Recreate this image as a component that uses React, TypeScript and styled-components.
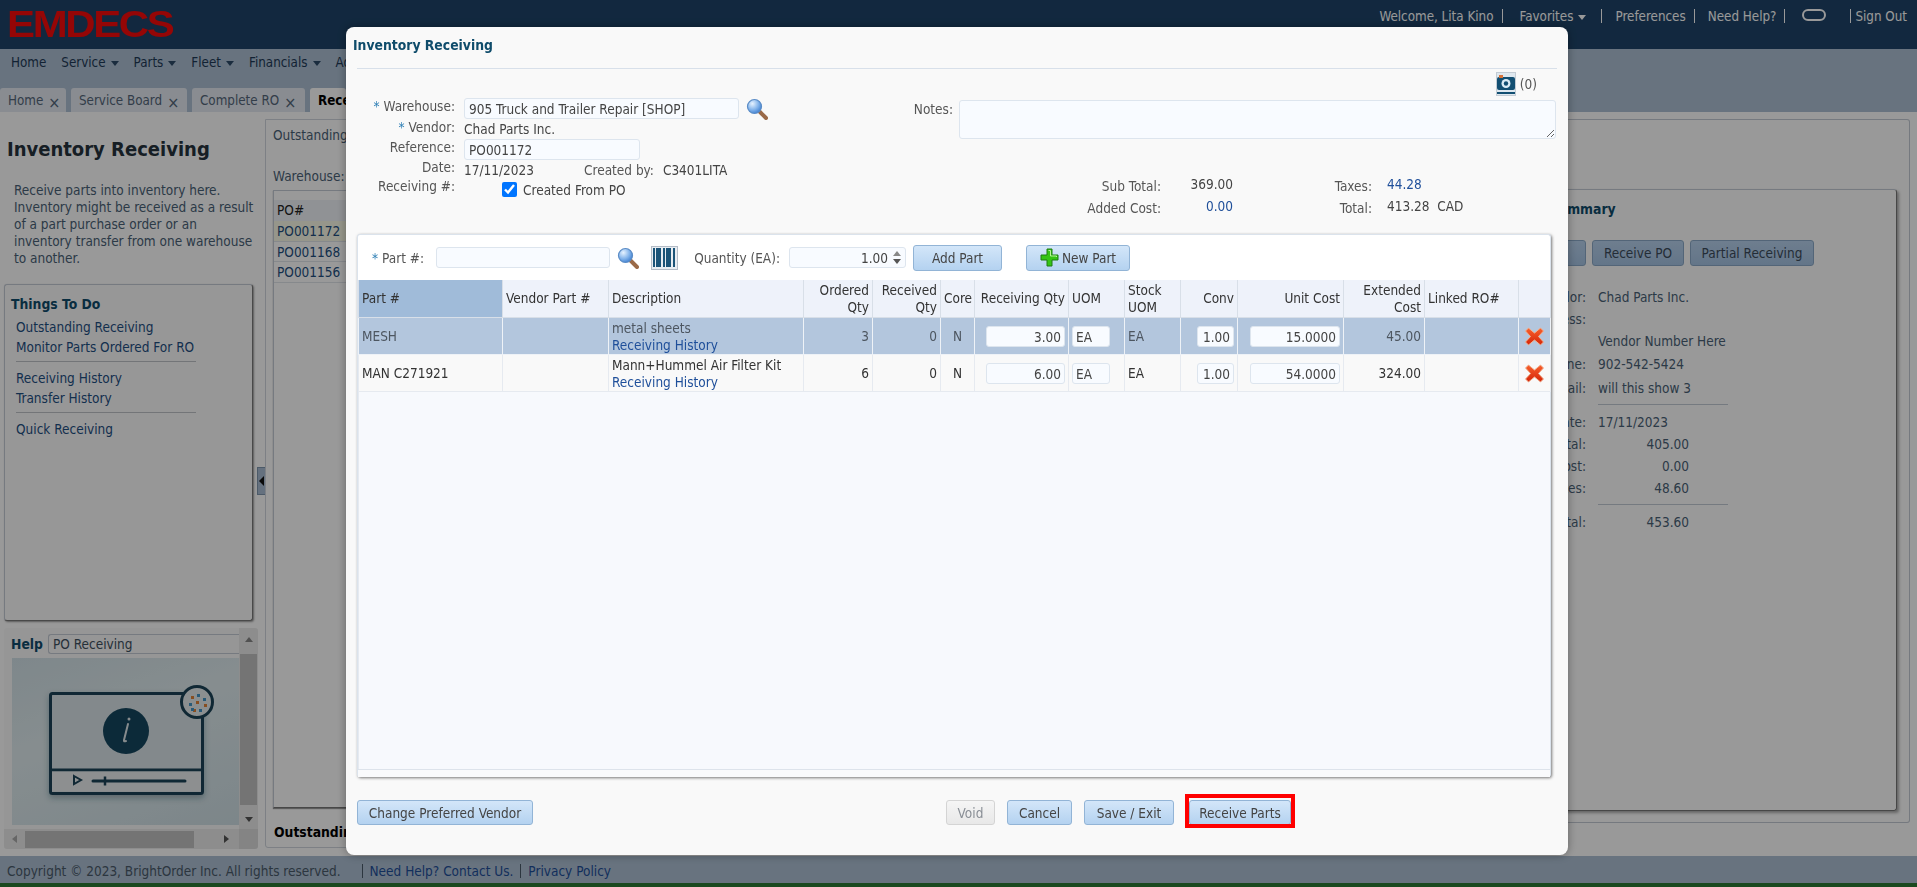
import { ReactElement } from 'react';
import styled, { createGlobalStyle } from 'styled-components';

const GlobalStyle = createGlobalStyle`
  html, body {
    margin: 0;
    padding: 0;
    height: 100%;
    overflow: hidden;
    background: #fff;
    color: #4a6277;
    font-family: "DejaVu Sans Condensed", "DejaVu Sans", sans-serif;
    font-stretch: condensed;
    font-size: 13.5px;
  }
  * { box-sizing: border-box; }
  input, textarea { font: inherit; font-stretch: condensed; }
`;

const Page = styled.div`
  display: flex;
  flex-direction: column;
  height: 887px;
  width: 1917px;
`;

/* top bars */
const Header = styled.header`
  align-items: flex-start;
  background: #1e4469;
  display: flex;
  height: 49px;
  justify-content: space-between;
  overflow: hidden;
`;
const Logo = styled.div`
  color: #f80a0a;
  font-family: "Liberation Sans", sans-serif;
  font-size: 36px;
  font-stretch: normal;
  font-weight: 700;
  letter-spacing: -2px;
  line-height: 30px;
  margin: 10px 0 0 7px;
  transform: scaleX(1.165);
  transform-origin: left center;
`;
const UserMenu = styled.nav`
  align-items: center;
  color: #fff;
  display: flex;
  font-size: 13.3px;
  height: 32px;
  padding-right: 10px;
`;
const UserLink = styled.span<{ $left: number }>`
  margin-left: ${p => p.$left}px;
  white-space: nowrap;
`;
const UserSep = styled.span<{ $left?: number }>`
  background: #fff;
  height: 14px;
  margin-left: ${p => p.$left || 8}px;
  width: 1px;
`;
const ChatOval = styled.span`
  border: 2px solid #fff;
  border-radius: 6px;
  height: 12px;
  margin: 0 16px 3px 17px;
  width: 24px;
`;
const Caret = styled.span<{ $color?: string }>`
  border-left: 4px solid transparent;
  border-right: 4px solid transparent;
  border-top: 5px solid ${p => p.$color || '#2c4a68'};
  display: inline-block;
  margin-left: 5px;
  vertical-align: 1px;
`;
const NavBar = styled.nav`
  align-items: center;
  background: #adc0d4;
  color: #1f3a57;
  display: flex;
  font-size: 13.3px;
  height: 39px;
  padding: 0 0 13px 11px;
`;
const NavItem = styled.span`
  margin-right: 15px;
  white-space: nowrap;
`;
const TabBar = styled.div`
  background: #adc0d4;
  display: flex;
  gap: 5px;
  height: 24px;
`;
const Tab = styled.div<{ $active?: boolean; $w: number }>`
  align-items: center;
  background: ${p => (p.$active ? '#fff' : '#e4eaf2')};
  border-radius: 3px 3px 0 0;
  color: ${p => (p.$active ? '#000' : '#55677a')};
  display: flex;
  font-size: 13.3px;
  font-weight: ${p => (p.$active ? 700 : 400)};
  gap: 5px;
  overflow: hidden;
  padding-left: 8px;
  width: ${p => p.$w}px;
`;
const TabClose = styled.span`
  color: #55677a;
  font-size: 16px;
  line-height: 15px;
  margin-top: 4px;
`;

/* page behind the dialog */
const Main = styled.main`
  background: #fff;
  display: flex;
  height: 744px;
  padding-left: 4px;
`;
const LeftColumn = styled.aside`
  display: flex;
  flex-direction: column;
  width: 254px;
`;
const PageTitle = styled.h1`
  color: #26323d;
  font-size: 20px;
  font-weight: 700;
  line-height: 24px;
  margin: 25px 0 0 3px;
`;
const Intro = styled.p`
  line-height: 17px;
  margin: 21px 0 17px 10px;
  width: 243px;
`;
const TodoPanel = styled.section`
  background: #fcfcfc;
  border: 1px solid #c5ccd6;
  border-bottom-color: #7a7a7a;
  border-radius: 3px;
  border-right-color: #7a7a7a;
  box-shadow: 1px 1px 2px #999;
  height: 337px;
  padding: 11px 6px;
  width: 249px;
`;
const PanelHeading = styled.h3`
  color: #0f4c6b;
  font-size: 13.8px;
  font-weight: 700;
  line-height: 16px;
  margin: 0 0 6px;
`;
const TodoLink = styled.div`
  color: #1f4f83;
  line-height: 19.5px;
  padding-left: 5px;
`;
const TodoRule = styled.div`
  background: #c0c4c8;
  height: 1px;
  margin: 4px 0 7px 5px;
  width: 180px;
`;
const HelpPanel = styled.section`
  background: #fafafa;
  border-radius: 3px;
  display: grid;
  grid-template-columns: 1fr 19px;
  grid-template-rows: 1fr 20px;
  height: 221px;
  margin-top: 7px;
  overflow: hidden;
  width: 254px;
`;
const HelpBody = styled.div`
  padding: 6px 0 0 8px;
`;
const HelpTop = styled.div`
  align-items: center;
  display: flex;
  gap: 5px;
  height: 20px;
  margin-bottom: 4px;
`;
const HelpLabel = styled.b`
  color: #0f4c6b;
  font-size: 13.8px;
  margin-left: -1px;
`;
const HelpSelect = styled.div`
  border: 1px solid #c5ccd6;
  border-right: 0;
  border-radius: 3px 0 0 3px;
  color: #3e5160;
  flex: 1;
  height: 20px;
  line-height: 18px;
  padding-left: 4px;
`;
const HelpPicture = styled.div`
  align-items: center;
  background: linear-gradient(160deg, #d3e2e8 0%, #e0ecef 40%, #d0e0e6 100%);
  display: flex;
  height: 167px;
  justify-content: center;
`;
const ScrollV = styled.div`
  align-items: center;
  background: #ececec;
  display: flex;
  flex-direction: column;
  height: 100%;
  justify-content: space-between;
  padding: 9px 0 7px;
`;
const ScrollThumbV = styled.div`
  background: #c2c2c2;
  height: 151px;
  margin: 4px 0;
  width: 17px;
`;
const ScrollH = styled.div`
  align-items: center;
  background: #ececec;
  display: flex;
  padding: 0 10px 0 8px;
`;
const ScrollThumbH = styled.div`
  background: #c2c2c2;
  height: 17px;
  margin: 0 auto 0 8px;
  width: 169px;
`;
const ScrollCorner = styled.div`
  background: #dcdcdc;
`;
const Arrow = styled.span<{ $dir: 'up' | 'down' | 'left' | 'right' }>`
  border: 4px solid transparent;
  ${p => (p.$dir === 'up' ? 'border-bottom: 5px solid #888; border-top: 0;' : '')}
  ${p => (p.$dir === 'down' ? 'border-top: 5px solid #555; border-bottom: 0;' : '')}
  ${p => (p.$dir === 'left' ? 'border-right: 5px solid #aaa; border-left: 0;' : '')}
  ${p => (p.$dir === 'right' ? 'border-left: 5px solid #555; border-right: 0;' : '')}
  height: 0;
  width: 0;
`;
const Splitter = styled.div`
  align-items: center;
  display: flex;
  justify-content: center;
  width: 7px;
`;
const SplitterHandle = styled.div`
  align-items: center;
  background: #a8bdd4;
  border: 1px solid #7f96ad;
  display: flex;
  flex: none;
  height: 28px;
  justify-content: center;
  margin-top: -7px;
  width: 9px;
`;
const SplitterArrow = styled.span`
  border-bottom: 5px solid transparent;
  border-right: 5px solid #111;
  border-top: 5px solid transparent;
`;
const WorkArea = styled.div`
  display: flex;
  flex: 1;
  padding: 7px 7px 0 0;
`;
const OutstandingPanel = styled.section`
  border: 1px solid #d0d6de;
  border-bottom-left-radius: 3px;
  display: flex;
  flex-direction: column;
  height: 729px;
  padding: 7px 7px;
  width: 640px;
`;
const FadedText = styled.div`
  line-height: 17px;
`;
const WarehouseText = styled(FadedText)`
  margin-top: 24px;
`;
const GridBox = styled.div`
  border: 1px solid #c5ccd6;
  border-bottom-color: #777;
  box-shadow: 0 1px 1px #999;
  height: 621px;
  margin-top: 5px;
`;
const GridHead = styled.div`
  background: #f0f3f8;
  border-top: 9px solid #fff;
  color: #222;
  height: 30px;
  line-height: 21px;
  padding-left: 3px;
`;
const GridRow = styled.div<{ $first?: boolean }>`
  background: ${p => (p.$first ? '#fbfbe8' : '#fff')};
  border-bottom: 1px solid #e0e4ea;
  color: #234f7f;
  height: 20.5px;
  line-height: 20px;
  padding-left: 3px;
`;
const BoldBottom = styled.div`
  color: #000;
  font-size: 13.8px;
  font-weight: 700;
  margin: 16px 0 0 1px;
`;
const SummaryArea = styled.section`
  border: 1px solid #c4cad4;
  border-left: 0;
  border-radius: 0 3px 3px 0;
  flex: 1;
  height: 704px;
  padding: 69px 12px 0 0;
`;
const SummaryPanel = styled.div`
  border: 1px solid #c5ccd6;
  border-bottom-color: #777;
  border-radius: 3px;
  border-right-color: #777;
  box-shadow: 2px 2px 3px #aaa;
  height: 622px;
  padding: 10px 0 0 360px;
`;
const SummaryTitle = styled.h3`
  color: #0f4c6b;
  font-size: 13.8px;
  font-weight: 700;
  line-height: 18px;
  margin: 0 0 22px 211px;
  white-space: nowrap;
`;
const SummaryActions = styled.div`
  display: flex;
  gap: 6px;
  margin-left: 230px;
`;
const SummaryButton = styled.div<{ $w: number }>`
  align-items: center;
  background: linear-gradient(#b8d2ee, #a6c4e4);
  border: 1px solid #8aa9c9;
  border-radius: 3px;
  color: #3d4c5c;
  display: flex;
  height: 26px;
  justify-content: center;
  width: ${p => p.$w}px;
`;
const SummaryList = styled.dl`
  column-gap: 12px;
  display: grid;
  grid-template-columns: 90px 130px;
  margin: 20px 0 0 230px;
`;
const SummaryLabel = styled.dt<{ $h: number }>`
  height: ${p => p.$h}px;
  line-height: ${p => p.$h}px;
  text-align: right;
`;
const SummaryValue = styled.dd<{ $h: number; $right?: boolean }>`
  height: ${p => p.$h}px;
  line-height: ${p => p.$h}px;
  margin: 0;
  padding-right: 39px;
  text-align: ${p => (p.$right ? 'right' : 'left')};
  white-space: nowrap;
`;
const SummaryRule = styled.div`
  background: #c4ccd6;
  grid-column: 2;
  height: 1px;
  margin: 5px 0 6px;
`;
const Footer = styled.footer`
  align-items: center;
  background: #adc0d4;
  border-bottom: 4px solid #2c7b35;
  color: #4a5a6a;
  display: flex;
  height: 31px;
  padding: 3px 0 0 7px;
`;
const FooterLink = styled.span`
  color: #1f4f9a;
`;
const FooterSep = styled.span<{ $left: number }>`
  background: #4a5a6a;
  height: 14px;
  margin: 0 7px 0 ${p => p.$left}px;
  width: 1px;
`;

/* dialog */
const Backdrop = styled.div`
  background: rgba(0, 0, 0, 0.4);
  inset: 0;
  position: fixed;
`;
const Dialog = styled.div`
  background: #f9f9f9;
  border-radius: 8px;
  box-shadow: 0 0 10px rgba(0, 0, 0, 0.35);
  color: #555;
  display: flex;
  flex-direction: column;
  height: 828px;
  left: 346px;
  padding: 0 17px 0 11px;
  position: fixed;
  top: 27px;
  width: 1222px;
`;
const DialogTitle = styled.h2`
  border-bottom: 1px solid #d8e0ea;
  color: #0f4c6b;
  font-size: 13.8px;
  font-weight: 700;
  height: 42px;
  line-height: 36px;
  margin: 0 -6px 0 0;
  text-indent: -4px;
`;
const AttachRow = styled.div`
  align-items: center;
  display: flex;
  gap: 4px;
  height: 29px;
  justify-content: flex-end;
  padding-right: 14px;
`;
const FormArea = styled.div`
  display: flex;
  height: 136px;
`;
const FormLeft = styled.div`
  column-gap: 9px;
  display: grid;
  grid-auto-rows: min-content;
  grid-template-columns: 98px 1fr;
  width: 489px;
`;
const FieldLabel = styled.div<{ $h: number }>`
  height: ${p => p.$h}px;
  line-height: ${p => p.$h - 4}px;
  text-align: right;
  white-space: nowrap;
`;
const Required = styled.span`
  color: #2e7fb5;
  margin-right: 4px;
`;
const FieldValue = styled.div<{ $h: number }>`
  align-items: center;
  color: #444;
  display: flex;
  height: ${p => p.$h}px;
`;
const TextField = styled.input<{ $w: number; $right?: boolean; $pr?: number }>`
  background: #f8fbff;
  border: 1px solid #dde5ee;
  border-radius: 3px;
  color: #444;
  height: 21px;
  outline: 0;
  padding: 2px ${p => p.$pr || 4}px 2px 4px;
  text-align: ${p => (p.$right ? 'right' : 'left')};
  width: ${p => p.$w}px;
`;
const SearchButton = styled.span`
  display: inline-flex;
  margin-left: 7px;
`;
const CreatedBy = styled.span`
  color: #555;
  margin: 0 9px 0 50px;
`;
const CreatedFrom = styled.label`
  align-items: center;
  display: flex;
  gap: 6px;
  margin: 2px 0 0 38px;
`;
const CheckBox = styled.input`
  height: 15px;
  margin: 0;
  width: 15px;
`;
const FormRight = styled.div`
  display: flex;
  flex: 1;
  flex-direction: column;
`;
const NotesRow = styled.div`
  display: flex;
  gap: 6px;
  margin-top: 2px;
`;
const NotesLabel = styled.div`
  line-height: 18px;
  text-align: right;
  width: 107px;
`;
const NotesBox = styled.textarea`
  background: #f8fbff;
  border: 1px solid #dde5ee;
  border-radius: 3px;
  flex: 1;
  height: 39px;
  margin-right: -5px;
  outline: 0;
`;
const Totals = styled.div`
  align-items: center;
  display: grid;
  grid-auto-rows: 22px;
  grid-template-columns: 315px 72px 139px auto;
  margin-top: 34px;
`;
const TotalLabel = styled.div`
  margin-top: 3px;
  text-align: right;
`;
const TotalValue = styled.div<{ $link?: boolean; $left?: boolean }>`
  color: ${p => (p.$link ? '#1f4f9a' : '#444')};
  margin-left: ${p => (p.$left ? '15px' : 0)};
  text-align: ${p => (p.$left ? 'left' : 'right')};
  white-space: pre;
`;
const PartsPanel = styled.section`
  background: #fff;
  border: 1px solid #dbe3ec;
  border-bottom: 0;
  border-radius: 3px;
  box-shadow: 1px 1px 3px #777;
  display: flex;
  flex-direction: column;
  height: 543px;
`;
const Toolbar = styled.div`
  align-items: center;
  display: flex;
  flex: none;
  height: 45px;
  padding-left: 14px;
`;
const ToolLabel = styled.span<{ $left?: number; $right?: number }>`
  margin: 0 ${p => p.$right || 9}px 0 ${p => p.$left || 0}px;
  white-space: nowrap;
`;
const Barcode = styled.span`
  display: inline-flex;
  margin-left: 12px;
`;
const Spinner = styled.span`
  display: flex;
  flex-direction: column;
  gap: 3px;
  margin: 0 12px 0 -13px;
`;
const Button = styled.button<{ $w: number; $gapLeft?: number }>`
  align-items: center;
  background: linear-gradient(#d3e6f9, #b4d2f0);
  border: 1px solid #92b4d6;
  border-radius: 3px;
  color: #444;
  display: inline-flex;
  font: inherit;
  font-stretch: condensed;
  gap: 3px;
  height: 25px;
  justify-content: center;
  margin-left: ${p => p.$gapLeft || 0}px;
  padding: 0;
  position: relative;
  width: ${p => p.$w}px;
`;
const ToolButton = styled(Button)`
  height: 26px;
`;
const VoidButton = styled(Button)`
  background: linear-gradient(#f5f5f5, #e8e8e8);
  border-color: #d4d4d4;
  color: #8a8f96;
`;
const HighlightedButton = styled(Button)`
  &::after {
    border: 4px solid #f00;
    bottom: -4px;
    content: '';
    left: -5px;
    pointer-events: none;
    position: absolute;
    right: -5px;
    top: -7px;
  }
`;
const PartsTable = styled.table`
  border-collapse: collapse;
  color: #333;
  table-layout: fixed;
  width: 1192px;
`;
const HeadCell = styled.th<{ $right?: boolean; $sorted?: boolean }>`
  background: ${p => (p.$sorted ? '#a0bbd9' : '#eef2fa')};
  border: 1px solid #d8dfe8;
  border-top: 0;
  color: #333;
  font-weight: 400;
  height: 37px;
  line-height: 17px;
  padding: 1px 3px 0;
  text-align: ${p => (p.$right ? 'right' : 'left')};
`;
const BodyRow = styled.tr<{ $selected?: boolean }>`
  background: ${p => (p.$selected ? '#b3c6dd' : '#f9f9f9')};
  color: ${p => (p.$selected ? '#4d5660' : '#333')};
`;
const Cell = styled.td<{ $right?: boolean; $center?: boolean }>`
  border: 1px solid #e6eaf0;
  height: 37px;
  line-height: 17px;
  padding: 2px 3px 0;
  text-align: ${p => (p.$right ? 'right' : p.$center ? 'center' : 'left')};
  white-space: nowrap;
`;
const SelectedCell = styled(Cell)`
  border-color: #eef2f7;
`;
const HistoryLink = styled.div`
  color: #1f4f9a;
`;
const CellInput = styled.input<{ $right?: boolean; $w: number }>`
  background: #f8fbff;
  border: 1px solid #dde5ee;
  border-radius: 3px;
  color: #444;
  height: 21px;
  outline: 0;
  padding: 0 3px;
  text-align: ${p => (p.$right ? 'right' : 'left')};
  vertical-align: middle;
  width: ${p => p.$w}px;
`;
const EmptyGrid = styled.div`
  background: #f7f9fd;
  border-left: 1px solid #e6eaf0;
  flex: 1;
`;
const GridFoot = styled.div`
  background: #f9fafc;
  border-top: 1px solid #dde3eb;
  flex: none;
  height: 8px;
`;
const ActionBar = styled.div`
  align-items: flex-start;
  display: flex;
  padding-top: 23px;
`;
const VoidSlot = styled.div`
  display: flex;
  margin-left: 413px;
`;
const DeleteSvg = styled.svg`
  display: block;
  margin: 0 auto;
`;

const columns = [144, 106, 195, 69, 68, 34, 94, 56, 56, 57, 106, 81, 94, 32];

function Magnifier(): ReactElement {
  return (
    <svg width="22" height="22" viewBox="0 0 22 22">
      <defs>
        <radialGradient id="glass" cx="35%" cy="30%" r="75%">
          <stop offset="0" stopColor="#e6f2ff" />
          <stop offset="0.6" stopColor="#7fb1ea" />
          <stop offset="1" stopColor="#3f7fd0" />
        </radialGradient>
      </defs>
      <line x1="13" y1="13" x2="20" y2="20" stroke="#9a6a48" strokeWidth="4" strokeLinecap="round" />
      <circle cx="8.5" cy="8.5" r="7" fill="url(#glass)" stroke="#5b8cc6" strokeWidth="1.2" />
    </svg>
  );
}

function BarcodeIcon(): ReactElement {
  const bars = [2, 5, 8, 12, 15, 18, 22];
  return (
    <svg width="27" height="24" viewBox="0 0 27 24">
      <rect x="0.5" y="0.5" width="26" height="23" fill="#e8edf2" stroke="#b4bcc6" />
      {bars.map(x => <rect key={x} x={x} y="2" width={x % 2 ? 3 : 2} height="19" fill="#1b5478" />)}
    </svg>
  );
}

function CameraIcon(): ReactElement {
  return (
    <svg width="20" height="24" viewBox="0 0 20 24">
      <rect x="0.5" y="0.5" width="19" height="23" fill="#dfe8ef" stroke="#c4ccd4" />
      <rect x="1" y="5" width="18" height="13" rx="2" fill="#134f72" />
      <rect x="3" y="3" width="4" height="3" fill="#d8743a" />
      <circle cx="10" cy="11.5" r="4.5" fill="#dcecf6" />
      <circle cx="10" cy="11.5" r="2.2" fill="#134f72" />
      <rect x="1" y="20" width="18" height="2" fill="#134f72" />
    </svg>
  );
}

function PlusIcon(): ReactElement {
  return (
    <svg width="19" height="19" viewBox="0 0 19 19">
      <path d="M7 1h5v6h6v5h-6v6H7v-6H1V7h6z" fill="#35c414" stroke="#1f7d10" strokeWidth="1" strokeLinejoin="round" />
      <path d="M8.5 2.5h2V8h6v1" fill="none" stroke="#b8f59a" strokeWidth="1" />
    </svg>
  );
}

function DeleteIcon(): ReactElement {
  return (
    <DeleteSvg width="19" height="19" viewBox="0 0 19 19">
      <defs>
        <linearGradient id="cross" x1="0" y1="0" x2="0" y2="1">
          <stop offset="0" stopColor="#f8602c" />
          <stop offset="1" stopColor="#d42408" />
        </linearGradient>
      </defs>
      <path d="M3.500 1 9.500 6 15.500 1 18.500 4 13.500 9.500 18.500 15 15.500 18 9.500 13 3.500 18 0.500 15 5.500 9.500 0.500 4z" fill="url(#cross)" stroke="#f0b090" strokeWidth="1" strokeLinejoin="round" />
    </DeleteSvg>
  );
}

function HelpArt(): ReactElement {
  return (
    <svg width="226" height="167" viewBox="0 0 226 167">
      <defs>
        <filter id="soft" x="-10%" y="-10%" width="125%" height="125%">
          <feDropShadow dx="0" dy="3" stdDeviation="3" floodColor="#1a3a4a" floodOpacity="0.35" />
        </filter>
      </defs>
      <rect x="37.5" y="35.5" width="152" height="100" rx="2" fill="#dbe5e9" stroke="#1c4358" strokeWidth="3" filter="url(#soft)" />
      <line x1="38" y1="112" x2="189" y2="112" stroke="#1c4358" strokeWidth="3" />
      <rect x="39" y="113.5" width="149" height="20" fill="#ebeff1" />
      <circle cx="113" cy="73" r="23" fill="#15465f" />
      <path d="M115 66 L111 82 Q110.500 84 113 83" fill="none" stroke="#dfe8ec" strokeWidth="2" strokeLinecap="round" />
      <circle cx="116" cy="61" r="1.500" fill="#dfe8ec" />
      <path d="M61 118 L68 122 L61 126 Z" fill="none" stroke="#1c4358" strokeWidth="2" />
      <line x1="80" y1="123" x2="172" y2="123" stroke="#1c4358" strokeWidth="3" strokeLinecap="round" />
      <line x1="92" y1="118.500" x2="92" y2="127.500" stroke="#1c4358" strokeWidth="2.500" />
      <circle cx="184" cy="44" r="15.500" fill="#e8eef0" stroke="#1c4358" strokeWidth="3" />
      {[[178, 38, '#e08238'], [184, 36, '#4496c8'], [190, 40, '#4496c8'], [176, 45, '#4496c8'], [183, 43, '#e08238'], [191, 46, '#e08238'], [180, 51, '#e08238'], [186, 51, '#4496c8'], [178, 50, '#4496c8']].map(([cx, cy, fill], i) => (
        <rect key={i} x={Number(cx)} y={Number(cy)} width="3" height="3" fill={String(fill)} />
      ))}
    </svg>
  );
}

export default function App(): ReactElement {
  return (
    <Page>
      <GlobalStyle />
      <Header>
        <Logo>EMDECS</Logo>
        <UserMenu>
          <UserLink $left={0}>Welcome, Lita Kino</UserLink>
          <UserSep />
          <UserLink $left={17}>Favorites<Caret $color="#fff" /></UserLink>
          <UserSep $left={15} />
          <UserLink $left={13}>Preferences</UserLink>
          <UserSep />
          <UserLink $left={13}>Need Help?</UserLink>
          <UserSep />
          <ChatOval />
          <UserSep />
          <UserLink $left={4}>Sign Out</UserLink>
        </UserMenu>
      </Header>
      <NavBar>
        <NavItem>Home</NavItem>
        <NavItem>Service<Caret /></NavItem>
        <NavItem>Parts<Caret /></NavItem>
        <NavItem>Fleet<Caret /></NavItem>
        <NavItem>Financials<Caret /></NavItem>
        <NavItem>Admin</NavItem>
      </NavBar>
      <TabBar>
        <Tab $w={66}>Home<TabClose>×</TabClose></Tab>
        <Tab $w={116}>Service Board<TabClose>×</TabClose></Tab>
        <Tab $w={113}>Complete RO<TabClose>×</TabClose></Tab>
        <Tab $w={36} $active>Receiving</Tab>
      </TabBar>
      <Main>
        <LeftColumn>
          <PageTitle>Inventory Receiving</PageTitle>
          <Intro>
            Receive parts into inventory here. Inventory might be received as a result of a part
            purchase order or an inventory transfer from one warehouse to another.
          </Intro>
          <TodoPanel>
            <PanelHeading>Things To Do</PanelHeading>
            <TodoLink>Outstanding Receiving</TodoLink>
            <TodoLink>Monitor Parts Ordered For RO</TodoLink>
            <TodoRule />
            <TodoLink>Receiving History</TodoLink>
            <TodoLink>Transfer History</TodoLink>
            <TodoRule />
            <TodoLink>Quick Receiving</TodoLink>
          </TodoPanel>
          <HelpPanel>
            <HelpBody>
              <HelpTop>
                <HelpLabel>Help</HelpLabel>
                <HelpSelect>PO Receiving</HelpSelect>
              </HelpTop>
              <HelpPicture><HelpArt /></HelpPicture>
            </HelpBody>
            <ScrollV>
              <Arrow $dir="up" />
              <ScrollThumbV />
              <Arrow $dir="down" />
            </ScrollV>
            <ScrollH>
              <Arrow $dir="left" />
              <ScrollThumbH />
              <Arrow $dir="right" />
            </ScrollH>
            <ScrollCorner />
          </HelpPanel>
        </LeftColumn>
        <Splitter>
          <SplitterHandle><SplitterArrow /></SplitterHandle>
        </Splitter>
        <WorkArea>
          <OutstandingPanel>
            <FadedText>Outstanding Receiving</FadedText>
            <WarehouseText>Warehouse:</WarehouseText>
            <GridBox>
              <GridHead>PO#</GridHead>
              <GridRow $first>PO001172</GridRow>
              <GridRow>PO001168</GridRow>
              <GridRow>PO001156</GridRow>
            </GridBox>
            <BoldBottom>Outstanding Items</BoldBottom>
          </OutstandingPanel>
          <SummaryArea>
            <SummaryPanel>
              <SummaryTitle>Receiving Summary</SummaryTitle>
              <SummaryActions>
                <SummaryButton $w={90}>Edit PO</SummaryButton>
                <SummaryButton $w={92}>Receive PO</SummaryButton>
                <SummaryButton $w={124}>Partial Receiving</SummaryButton>
              </SummaryActions>
              <SummaryList>
                <SummaryLabel $h={22}>Vendor:</SummaryLabel><SummaryValue $h={22}>Chad Parts Inc.</SummaryValue>
                <SummaryLabel $h={22}>Address:</SummaryLabel><SummaryValue $h={22} />
                <SummaryLabel $h={22} /><SummaryValue $h={22}>Vendor Number Here</SummaryValue>
                <SummaryLabel $h={25}>Phone:</SummaryLabel><SummaryValue $h={25}>902-542-5424</SummaryValue>
                <SummaryLabel $h={22}>Email:</SummaryLabel><SummaryValue $h={22}>will this show 3</SummaryValue>
                <SummaryRule />
                <SummaryLabel $h={22}>Date:</SummaryLabel><SummaryValue $h={22}>17/11/2023</SummaryValue>
                <SummaryLabel $h={22}>Sub Total:</SummaryLabel><SummaryValue $h={22} $right>405.00</SummaryValue>
                <SummaryLabel $h={22}>Added Cost:</SummaryLabel><SummaryValue $h={22} $right>0.00</SummaryValue>
                <SummaryLabel $h={22}>Taxes:</SummaryLabel><SummaryValue $h={22} $right>48.60</SummaryValue>
                <SummaryRule />
                <SummaryLabel $h={22}>Total:</SummaryLabel><SummaryValue $h={22} $right>453.60</SummaryValue>
              </SummaryList>
            </SummaryPanel>
          </SummaryArea>
        </WorkArea>
      </Main>
      <Footer>
        Copyright © 2023, BrightOrder Inc. All rights reserved.
        <FooterSep $left={21} />
        <FooterLink>Need Help? Contact Us.</FooterLink>
        <FooterSep $left={7} />
        <FooterLink>Privacy Policy</FooterLink>
      </Footer>

      <Backdrop />
      <Dialog>
        <DialogTitle>Inventory Receiving</DialogTitle>
        <AttachRow>
          <CameraIcon />
          (0)
        </AttachRow>
        <FormArea>
          <FormLeft>
            <FieldLabel $h={21}><Required>*</Required>Warehouse:</FieldLabel>
            <FieldValue $h={21}>
              <TextField $w={275} readOnly value="905 Truck and Trailer Repair [SHOP]" />
              <SearchButton><Magnifier /></SearchButton>
            </FieldValue>
            <FieldLabel $h={20}><Required>*</Required>Vendor:</FieldLabel>
            <FieldValue $h={20}>Chad Parts Inc.</FieldValue>
            <FieldLabel $h={21}>Reference:</FieldLabel>
            <FieldValue $h={21}><TextField $w={176} readOnly value="PO001172" /></FieldValue>
            <FieldLabel $h={19}>Date:</FieldLabel>
            <FieldValue $h={19}>
              17/11/2023
              <CreatedBy>Created by:</CreatedBy>
              C3401LITA
            </FieldValue>
            <FieldLabel $h={19}>Receiving #:</FieldLabel>
            <FieldValue $h={19}>
              <CreatedFrom>
                <CheckBox type="checkbox" checked readOnly />
                Created From PO
              </CreatedFrom>
            </FieldValue>
          </FormLeft>
          <FormRight>
            <NotesRow>
              <NotesLabel>Notes:</NotesLabel>
              <NotesBox />
            </NotesRow>
            <Totals>
              <TotalLabel>Sub Total:</TotalLabel>
              <TotalValue>369.00</TotalValue>
              <TotalLabel>Taxes:</TotalLabel>
              <TotalValue $link $left>44.28</TotalValue>
              <TotalLabel>Added Cost:</TotalLabel>
              <TotalValue $link>0.00</TotalValue>
              <TotalLabel>Total:</TotalLabel>
              <TotalValue $left>413.28  CAD</TotalValue>
            </Totals>
          </FormRight>
        </FormArea>
        <PartsPanel>
          <Toolbar>
            <ToolLabel $right={12}><Required>*</Required>Part #:</ToolLabel>
            <TextField $w={174} readOnly value="" />
            <SearchButton><Magnifier /></SearchButton>
            <Barcode><BarcodeIcon /></Barcode>
            <ToolLabel $left={16}>Quantity (EA):</ToolLabel>
            <TextField $w={117} $right $pr={17} readOnly value="1.00" />
            <Spinner><Arrow $dir="up" /><Arrow $dir="down" /></Spinner>
            <ToolButton $w={89}>Add Part</ToolButton>
            <ToolButton $w={104} $gapLeft={24}><PlusIcon />New Part</ToolButton>
          </Toolbar>
          <PartsTable>
            <colgroup>
              {columns.map((w, i) => <col key={i} style={{ width: w }} />)}
            </colgroup>
            <thead>
              <tr>
                <HeadCell $sorted>Part #</HeadCell>
                <HeadCell>Vendor Part #</HeadCell>
                <HeadCell>Description</HeadCell>
                <HeadCell $right>Ordered Qty</HeadCell>
                <HeadCell $right>Received Qty</HeadCell>
                <HeadCell>Core</HeadCell>
                <HeadCell $right>Receiving Qty</HeadCell>
                <HeadCell>UOM</HeadCell>
                <HeadCell>Stock UOM</HeadCell>
                <HeadCell $right>Conv</HeadCell>
                <HeadCell $right>Unit Cost</HeadCell>
                <HeadCell $right>Extended Cost</HeadCell>
                <HeadCell>Linked RO#</HeadCell>
                <HeadCell />
              </tr>
            </thead>
            <tbody>
              <BodyRow $selected>
                <SelectedCell>MESH</SelectedCell>
                <SelectedCell />
                <SelectedCell>metal sheets<HistoryLink>Receiving History</HistoryLink></SelectedCell>
                <SelectedCell $right>3</SelectedCell>
                <SelectedCell $right>0</SelectedCell>
                <SelectedCell $center>N</SelectedCell>
                <SelectedCell $right><CellInput $right $w={79} readOnly value="3.00" /></SelectedCell>
                <SelectedCell><CellInput $w={38} readOnly value="EA" /></SelectedCell>
                <SelectedCell>EA</SelectedCell>
                <SelectedCell $right><CellInput $right $w={37} readOnly value="1.00" /></SelectedCell>
                <SelectedCell $right><CellInput $right $w={90} readOnly value="15.0000" /></SelectedCell>
                <SelectedCell $right>45.00</SelectedCell>
                <SelectedCell />
                <SelectedCell $center><DeleteIcon /></SelectedCell>
              </BodyRow>
              <BodyRow>
                <Cell>MAN C271921</Cell>
                <Cell />
                <Cell>Mann+Hummel Air Filter Kit<HistoryLink>Receiving History</HistoryLink></Cell>
                <Cell $right>6</Cell>
                <Cell $right>0</Cell>
                <Cell $center>N</Cell>
                <Cell $right><CellInput $right $w={79} readOnly value="6.00" /></Cell>
                <Cell><CellInput $w={38} readOnly value="EA" /></Cell>
                <Cell>EA</Cell>
                <Cell $right><CellInput $right $w={37} readOnly value="1.00" /></Cell>
                <Cell $right><CellInput $right $w={90} readOnly value="54.0000" /></Cell>
                <Cell $right>324.00</Cell>
                <Cell />
                <Cell $center><DeleteIcon /></Cell>
              </BodyRow>
            </tbody>
          </PartsTable>
          <EmptyGrid />
          <GridFoot />
        </PartsPanel>
        <ActionBar>
          <Button $w={176}>Change Preferred Vendor</Button>
          <VoidSlot>
            <VoidButton $w={49}>Void</VoidButton>
            <Button $w={65} $gapLeft={12}>Cancel</Button>
            <Button $w={90} $gapLeft={12}>Save / Exit</Button>
            <HighlightedButton $w={102} $gapLeft={15}>Receive Parts</HighlightedButton>
          </VoidSlot>
        </ActionBar>
      </Dialog>
    </Page>
  );
}
